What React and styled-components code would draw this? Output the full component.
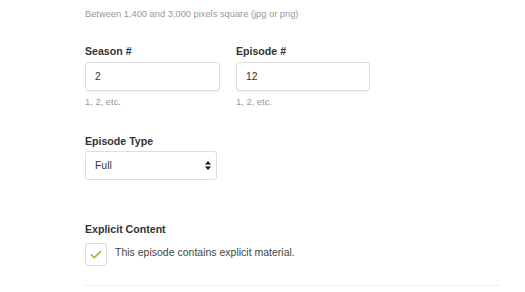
import React from 'react';
import styled, { createGlobalStyle } from 'styled-components';

const Global = createGlobalStyle`
    body {
        margin: 0;
        background: #fff;
        font-family: "Liberation Sans", Arial, sans-serif;
    }
`

const Page = styled.div`
    padding: 8px 0 0 85px;
    width: 415px;
`

const Help = styled.p`
    margin: 0;
    font-size: 9.3px;
    line-height: 13px;
    color: #999;
`

const Row = styled.div`
    display: flex;
    gap: 16px;
    margin-top: 23px;
`

const Field = styled.div`
    display: flex;
    flex-direction: column;
    margin-top: ${p => p.top || 0}px;
`

const Label = styled.label`
    font-size: 10.6px;
    font-weight: 700;
    line-height: 14px;
    color: #333;
    margin-bottom: ${p => p.gap || 4}px;
`

const Input = styled.input`
    box-sizing: border-box;
    width: ${p => p.w || 135}px;
    height: 29px;
    padding: 0 9px;
    border: 1px solid #ddd;
    border-radius: 3px;
    box-shadow: 0 1px 1px rgba(0, 0, 0, 0.03);
    font-family: inherit;
    font-size: 10.4px;
    color: #333;
    outline: none;
`

const Hint = styled.span`
    margin-top: 4px;
    font-size: 9.4px;
    line-height: 13px;
    color: #999;
`

const SelectWrap = styled.div`
    position: relative;
    width: 132px;
`

const Select = styled.select`
    box-sizing: border-box;
    width: 100%;
    height: 29px;
    padding: 0 9px;
    border: 1px solid #ddd;
    border-radius: 3px;
    background: #fff;
    appearance: none;
    font-family: inherit;
    font-size: 10.4px;
    color: #333;
    outline: none;
`

const Arrows = styled.svg`
    position: absolute;
    right: 6px;
    top: 10px;
    pointer-events: none;
`

const CheckRow = styled.label`
    display: flex;
    align-items: flex-start;
    gap: 8px;
    font-size: 10.5px;
    line-height: 14px;
    color: #444;
`

const Box = styled.span`
    box-sizing: border-box;
    width: 22px;
    height: 23px;
    border: 1px solid #ddd;
    border-radius: 3px;
    display: flex;
    align-items: center;
    justify-content: center;
`

const CheckText = styled.span`
    margin-top: 2px;
`

const Divider = styled.hr`
    margin: 19px 0 0;
    border: none;
    border-top: 1px solid #eee;
`

const App = () => {
    return (
        <>
            <Global />
            <Page>
                <Help>Between 1,400 and 3,000 pixels square (jpg or png)</Help>
                <Row>
                    <Field>
                        <Label>Season #</Label>
                        <Input defaultValue="2" />
                        <Hint>1, 2, etc.</Hint>
                    </Field>
                    <Field>
                        <Label>Episode #</Label>
                        <Input w={134} defaultValue="12" />
                        <Hint>1, 2, etc.</Hint>
                    </Field>
                </Row>
                <Field top={26}>
                    <Label gap={3}>Episode Type</Label>
                    <SelectWrap>
                        <Select defaultValue="full">
                            <option value="full">Full</option>
                            <option value="trailer">Trailer</option>
                            <option value="bonus">Bonus</option>
                        </Select>
                        <Arrows width="6" height="9" viewBox="0 0 6 9">
                            <path d="M3 0 L6 3.6 L0 3.6 Z M3 9 L6 5.4 L0 5.4 Z" fill="#111" />
                        </Arrows>
                    </SelectWrap>
                </Field>
                <Field top={42}>
                    <Label gap={7}>Explicit Content</Label>
                    <CheckRow>
                        <Box>
                            <svg width="12" height="9" viewBox="0 0 12 9">
                                <path d="M1 4.5 L4.3 7.6 L11 1.2" fill="none" stroke="#8cc63f" strokeWidth="1.8" />
                            </svg>
                        </Box>
                        <CheckText>This episode contains explicit material.</CheckText>
                    </CheckRow>
                </Field>
                <Divider />
            </Page>
        </>
    );
};

export default App;
